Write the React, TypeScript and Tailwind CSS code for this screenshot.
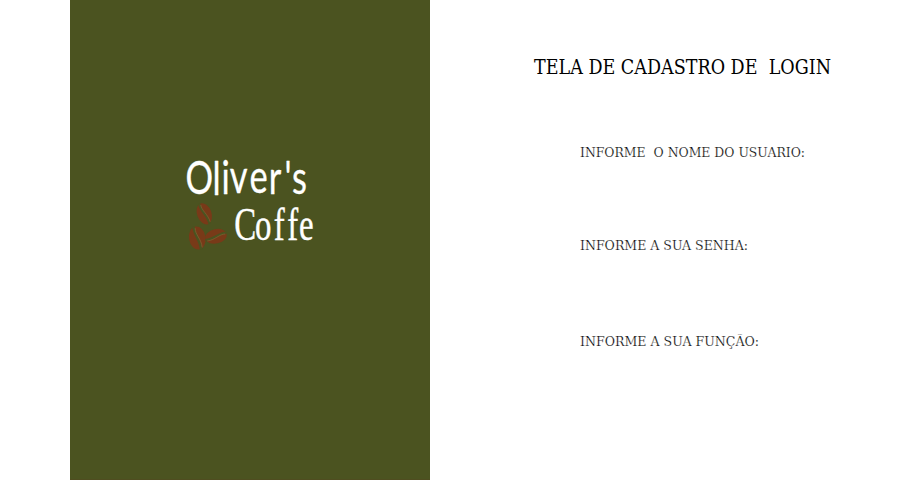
import React from "react";

function Bean({ transform }: { transform: string }) {
  return (
    <g transform={transform}>
      <ellipse rx="7.2" ry="11" fill="#783a18" />
      <path
        d="M-1.4 -11.2 C-3 -4 2.4 2 1.4 11.2"
        fill="none" stroke="#4b5320" strokeWidth="2.1"
      />
      <path
        d="M-0.3 -9.5 C-1.6 -4 3.6 2 2.7 9.5"
        fill="none" stroke="#7f6f3c" strokeWidth="0.5"
      />
    </g>
  );
}

function Logo() {
  return (
    <svg
      width="140" height="100" viewBox="180 154 140 100"
      className="block overflow-visible" role="img" aria-label="Oliver's Coffe"
    >
      <g transform="translate(187 193.6) scale(0.75 1)">
        <text
          x="-2 34 46 57 83.5 109 130 140" y="0 1 0 -0.5 -0.5 0 0 0.5"
          fontFamily="Lato, sans-serif" fontSize="46" fill="#fff" stroke="#fff"
          strokeWidth="0.3" strokeLinejoin="round"
        >
          Oliver's
        </text>
      </g>
      <g transform="translate(235 239.5) scale(0.7 1)">
        <text
          x="-1 28.5 55.5 74.5 91.5" y="0" fontFamily="'Liberation Serif', serif"
          fontSize="47" fill="#fff" stroke="#fff" strokeWidth="0.4" strokeLinejoin="round"
        >
          Coffe
        </text>
      </g>
      <Bean transform="translate(204.3 213.8) rotate(-20)" />
      <Bean transform="translate(197.3 238) rotate(-10) scale(1.15 1.06)" />
      <Bean transform="translate(216 236.3) rotate(78)" />
    </svg>
  );
}

function Label({ text, width }: { text: string; width: number }) {
  return (
    <svg width={width} height="24" className="block overflow-visible">
      <text
        x="0" y="17" xmlSpace="preserve" fontFamily="'DejaVu Serif', serif" fontSize="13.5"
        fill="#000" stroke="#fff" strokeWidth="0.22" textLength={width}
        lengthAdjust="spacingAndGlyphs"
      >
        {text}
      </text>
    </svg>
  );
}

export default function App() {
  return (
    <main className="flex h-[480px] w-[915px] overflow-hidden bg-white pl-[70px]">
      <section className="flex w-[360px] shrink-0 justify-center border-b border-[#4f4d20] bg-[#4b5320] pt-[154px]">
        <Logo />
      </section>
      <section className="flex flex-1 flex-col pl-[104px] pt-[52px]">
        <h1>
          <svg width="297" height="28" className="block overflow-visible">
            <text
              x="0" y="22" xmlSpace="preserve" fontFamily="'DejaVu Serif', serif" fontSize="19.5"
              fill="#000" textLength="297" lengthAdjust="spacingAndGlyphs"
            >
              {"TELA DE CADASTRO DE  LOGIN"}
            </text>
          </svg>
        </h1>
        <div className="flex flex-col pl-[46px] pt-[60px]">
          <Label width={225} text="INFORME  O NOME DO USUARIO:" />
          <div className="pt-[69px]">
            <Label width={168} text="INFORME A SUA SENHA:" />
          </div>
          <div className="pt-[72px]">
            <Label width={179} text="INFORME A SUA FUNÇÃO:" />
          </div>
        </div>
      </section>
    </main>
  );
}
